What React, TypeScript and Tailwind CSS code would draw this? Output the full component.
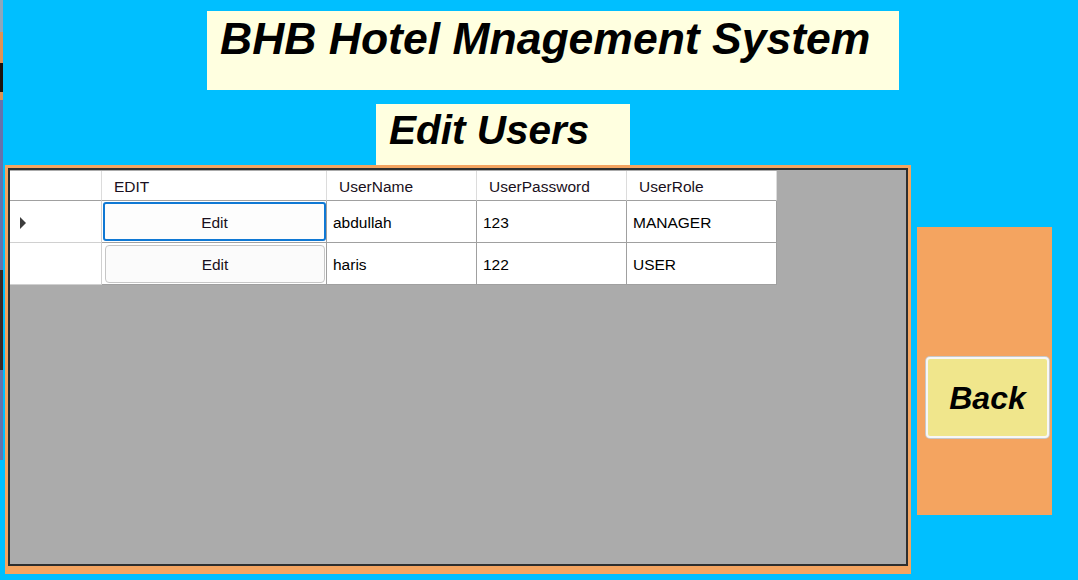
const users = [
  { name: 'abdullah', password: '123', role: 'MANAGER', current: true },
  { name: 'haris', password: '122', role: 'USER', current: false },
];

function RowArrow() {
  return (
    <svg width="8" height="12" viewBox="0 0 8 12">
      <path d="M1 0 L7 6 L1 12 Z" fill="#3c3c3c" />
    </svg>
  );
}

export default function App() {
  return (
    <div className="flex h-[580px] w-[1078px] overflow-hidden bg-[#00bfff] font-['Liberation_Sans',Arial,sans-serif] text-black">
      {/* window peeking out behind on the left */}
      <div className="flex w-[3px] flex-col">
        <div className="h-[32px] bg-[#8ea6bb]" />
        <div className="h-[31px] bg-[#de9256]" />
        <div className="h-[29px] bg-[#1c1410]" />
        <div className="h-[8px] bg-[#de9256]" />
        <div className="h-[170px] bg-[#6673ad]" />
        <div className="h-[100px] bg-[#3b2a26]" />
        <div className="h-[90px] bg-[#6673ad]" />
        <div className="flex-1 bg-[#00bfff]" />
      </div>

      <div className="flex flex-1 flex-col">
        <div className="ml-[204px] mt-[11px] h-[79px] w-[692px] bg-[#ffffe0] pl-[13px] pt-[6px] text-[44.5px] font-bold italic leading-none">
          BHB Hotel Mnagement System
        </div>

        <div className="ml-[373px] mt-[14px] h-[61px] w-[254px] bg-[#ffffe0] pl-[13px] pt-[6px] text-[40.5px] font-bold italic leading-none">
          Edit Users
        </div>

        <div className="flex items-start">
          <div className="ml-[2px] h-[409px] w-[906px] bg-[#f4a460] pb-[8px] pl-[3px] pr-[3px] pt-[3px]">
            <div className="h-full border-2 border-[#2e2e2e] bg-[#ababab] pt-[1px]">
              <div className="grid w-fit grid-cols-[92px_225px_150px_150px_150px] text-[15.5px]">
                <div className="h-[30px] border-b border-r border-b-[#a0a0a0] border-r-[#dcdcdc] bg-white" />
                {['EDIT', 'UserName', 'UserPassword', 'UserRole'].map((h) => (
                  <div
                    key={h}
                    className="flex h-[30px] items-center border-b border-r border-b-[#a0a0a0] border-r-[#dcdcdc] bg-white pl-[12px] pt-[2px] text-[#1a1020]"
                  >
                    {h}
                  </div>
                ))}

                {users.map((u) => (
                  <div key={u.name} className="contents">
                    <div className="flex h-[42px] items-center border-b border-r border-[#d0d0d0] bg-white pl-[9px] pt-[2px]">
                      {u.current && <RowArrow />}
                    </div>
                    <div
                      className={
                        u.current
                          ? 'h-[42px] border-b border-r border-[#a0a0a0] bg-white pb-[1px] pl-[1px] pr-[0px] pt-[1px]'
                          : 'h-[42px] border-b border-r border-[#a0a0a0] bg-white pb-[1px] pl-[3px] pr-[1px] pt-[2px]'
                      }
                    >
                      <button
                        className={
                          u.current
                            ? 'flex h-full w-full items-center justify-center rounded-[3px] border-2 border-[#0f78d4] bg-[#fdfdfd] pt-[2px] text-[15.5px] text-[#1a1020]'
                            : 'flex h-full w-full items-center justify-center rounded-[4px] border border-[#c6c6c6] bg-[#fbfbfb] pt-[1px] text-[15.5px] text-[#1a1020]'
                        }
                      >
                        Edit
                      </button>
                    </div>
                    <div className="flex h-[42px] items-center border-b border-r border-[#a0a0a0] bg-white pl-[6px] pt-[2px]">
                      {u.name}
                    </div>
                    <div className="flex h-[42px] items-center border-b border-r border-[#a0a0a0] bg-white pl-[6px] pt-[2px]">
                      {u.password}
                    </div>
                    <div className="flex h-[42px] items-center border-b border-r border-[#a0a0a0] bg-white pl-[6px] pt-[2px]">
                      {u.role}
                    </div>
                  </div>
                ))}
              </div>
            </div>
          </div>

          <div className="ml-[6px] mt-[62px] h-[288px] w-[135px] bg-[#f4a460] pl-[9px] pt-[130px]">
            <button className="flex h-[81px] w-[123px] items-center justify-center rounded-[4px] border-2 border-[#f7f7f7] bg-[#f0e68c] text-[32px] font-bold italic leading-none shadow-[0_0_0_1px_#c8c8c8]">
              Back
            </button>
          </div>
        </div>
      </div>
    </div>
  );
}
